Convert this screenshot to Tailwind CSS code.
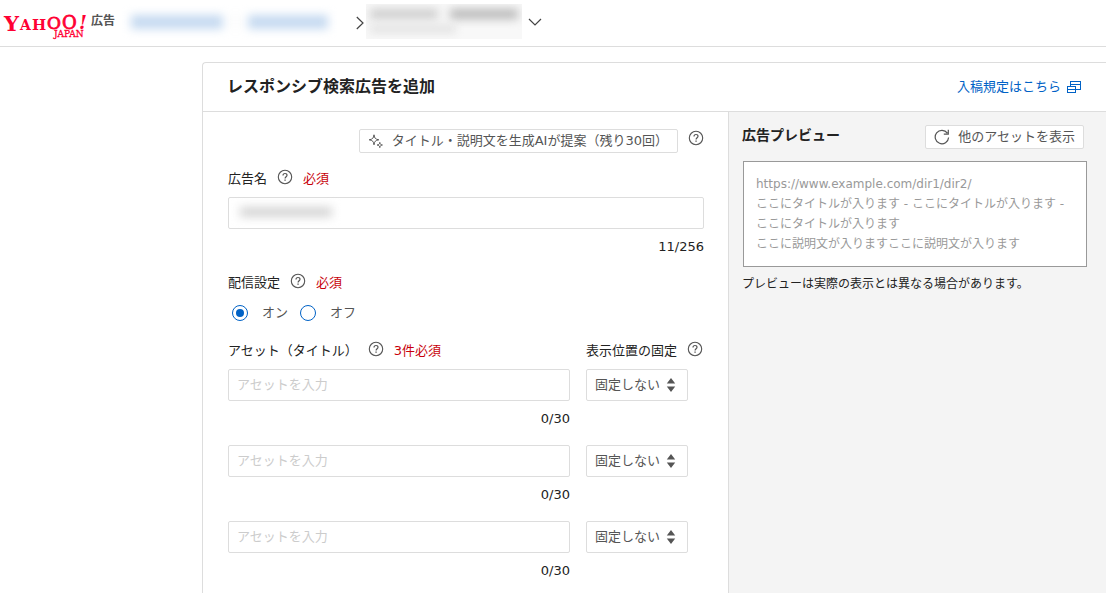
<!DOCTYPE html>
<html lang="ja">
<head>
<meta charset="utf-8">
<meta name="viewport" content="width=device-width, initial-scale=1">
<title>レスポンシブ検索広告を追加</title>
<script src="https://cdn.jsdelivr.net/npm/@tailwindcss/browser@4"></script>
</head>
<body class="flex h-screen flex-col overflow-hidden bg-white font-['DejaVu_Sans','Noto_Sans_CJK_JP',sans-serif] text-[13px] leading-5 text-[#222]">
<svg class="hidden" aria-hidden="true">
  <symbol id="help" viewBox="0 0 16 16">
    <g fill="none" stroke="#555"><circle cx="8" cy="8" r="6.7" stroke-width="1.1"/><path d="M6 6.4C6 5.1 6.9 4.5 8 4.5s2 .7 2 1.8c0 1.4-1.9 1.5-1.9 3.100" stroke-width="1.2"/></g><rect x="7.4" y="10.5" width="1.3" height="1.3" fill="#555"/>
  </symbol>
  <symbol id="updown" viewBox="0 0 10 14"><path d="M5 0l4.2 5.4H.8zM5 14L.8 8.6h8.4z" fill="#555"/></symbol>
</svg>

<header class="flex h-[47px] shrink-0 items-start border-b border-[#ddd]">
  <a href="#" class="flex items-start" aria-label="Yahoo! JAPAN 広告">
    <svg class="h-10 w-[90px] overflow-visible" viewBox="0 0 90 40" fill="#f03" font-family="'DejaVu Serif',serif" font-weight="bold" aria-hidden="true">
      <text x="4" y="31" font-size="21">Y</text>
      <text x="20" y="30" font-size="14">A</text>
      <text x="32" y="30" font-size="15">H</text>
      <g font-weight="normal" stroke="#f03" stroke-width=".8">
        <text x="47" y="29" font-size="17">O</text>
        <text x="62" y="29" font-size="18">O</text>
      </g>
      <text x="79" y="29" font-size="18" font-style="italic">!</text>
      <text x="54" y="37" font-size="9" font-weight="normal" stroke="#f03" stroke-width=".3">JAPAN</text>
    </svg>
    <span class="mt-[13px] ml-px text-xs font-bold text-[#555]">広告</span>
  </a>
  <div class="mt-[15px] ml-4 flex h-[14px] gap-3 blur-[5px]" aria-hidden="true">
    <span class="w-[92px] bg-[#c6daf1]"></span>
    <span class="w-px bg-[#ddd]"></span>
    <span class="w-20 bg-[#c6daf1]"></span>
  </div>
  <svg class="mt-4 ml-7 h-[14px] w-2" viewBox="0 0 8 14" fill="none" stroke="#444" stroke-width="1.2"><path d="M.8 1L7 7 .8 13"/></svg>
  <button type="button" class="mt-1 ml-[2px] flex items-start" aria-label="アカウントを選択">
    <span class="flex h-[35px] w-[156px] flex-col gap-[6px] overflow-hidden bg-[#f8f8f8] px-1 pt-[5px]">
      <span class="flex h-[10px] gap-3 blur-[5px]"><span class="w-[68px] bg-[#cdcdcd]"></span><span class="w-[68px] bg-[#b8b8b8]"></span></span>
      <span class="h-[8px] w-[86px] bg-[#e2e2e2] blur-[4px]"></span>
    </span>
    <svg class="mt-[14px] ml-[6px] h-2 w-[14px]" viewBox="0 0 14 8" fill="none" stroke="#444" stroke-width="1.2"><path d="M1 1l6 6 6-6"/></svg>
  </button>
</header>

<main class="mt-[15px] ml-[202px] flex flex-1 flex-col rounded-tl-sm border-t border-l border-[#ddd]">
  <div class="flex h-[49px] shrink-0 items-center justify-between border-b border-[#ddd] pr-6 pl-6">
    <h1 class="text-base font-bold">レスポンシブ検索広告を追加</h1>
    <a href="#" class="flex items-center gap-[5px] text-[#0062c6]">入稿規定はこちら
      <svg class="h-4 w-4" viewBox="0 0 16 16" fill="none" stroke="#0062c6" stroke-width="1" shape-rendering="crispEdges"><path d="M4.500 7.500v-5h10v8h-5M4.500 5.500h10M1.500 7.500h8v6h-8zM1.500 10.500h8"/></svg>
    </a>
  </div>
  <div class="flex flex-1">
    <form class="flex-1 pt-[17px] pr-6 pl-[25px]">
      <div class="flex items-start justify-end gap-[10px]">
        <button type="button" class="flex h-6 items-center rounded-xs border border-[#ddd] pr-[9px] pl-2 text-[#555]">
          <svg class="mr-2 h-4 w-4" viewBox="0 0 16 16" fill="none" stroke="#555"><path d="M6 1.800C6.500 5.300 7.400 6.200 10.800 6.800 7.400 7.400 6.500 8.300 6 11.800 5.500 8.300 4.600 7.400 1.200 6.800 4.600 6.200 5.500 5.300 6 1.800zM11.800 9.400c.3 1.700.8 2.300 2.600 2.600-1.800.3-2.300.9-2.600 2.600-.3-1.700-.8-2.300-2.600-2.600 1.800-.3 2.300-.9 2.600-2.600z"/></svg>
          タイトル・説明文を生成AIが提案（残り30回）
        </button>
        <svg class="mt-px h-4 w-4" role="img" aria-label="ヘルプ"><use href="#help"/></svg>
      </div>

      <div class="mt-4 flex h-5 items-center">
        <label for="adname">広告名</label>
        <svg class="mr-[10px] mb-1 ml-[10px] h-4 w-4"><use href="#help"/></svg>
        <span class="text-[#c8000a]">必須</span>
      </div>
      <div class="relative mt-2">
        <input id="adname" type="text" class="block h-8 w-full rounded-xs border border-[#ddd] px-2 outline-none">
        <span class="pointer-events-none absolute top-[10px] left-3 h-[10px] w-[92px] bg-[#d5d5d5] blur-[5px]"></span>
      </div>
      <p class="mt-2 text-right">11/256</p>

      <fieldset class="mt-4">
        <legend class="flex h-5 items-center">配信設定
          <svg class="mr-[10px] mb-1 ml-[10px] h-4 w-4"><use href="#help"/></svg>
          <span class="text-[#c8000a]">必須</span>
        </legend>
        <div class="mt-[10px] flex h-5 items-center pl-1 text-[#555]">
          <input id="on" name="delivery" type="radio" checked class="h-4 w-4 appearance-none rounded-full border border-[#0062c6] bg-white bg-clip-content p-[3px] checked:bg-[#0062c6]">
          <label for="on" class="ml-[14px]">オン</label>
          <input id="off" name="delivery" type="radio" class="ml-3 h-4 w-4 appearance-none rounded-full border border-[#0062c6] bg-white bg-clip-content p-[3px] checked:bg-[#0062c6]">
          <label for="off" class="ml-[14px]">オフ</label>
        </div>
      </fieldset>

      <div class="mt-[18px] grid grid-cols-[1fr_118px] gap-x-4">
        <div class="flex h-5 items-center">アセット（タイトル）
          <svg class="mr-[10px] mb-1 ml-[10px] h-4 w-4"><use href="#help"/></svg>
          <span class="text-[#c8000a]">3件必須</span>
        </div>
        <div class="flex h-5 items-center">表示位置の固定
          <svg class="mb-1 ml-[10px] h-4 w-4"><use href="#help"/></svg>
        </div>

        <div class="mt-2">
          <input type="text" aria-label="アセット（タイトル）1" placeholder="アセットを入力" class="block h-8 w-full rounded-xs border border-[#ddd] px-2 pb-[2px] outline-none placeholder:text-[#ccc]">
          <p class="mt-2 text-right">0/30</p>
        </div>
        <div class="mt-2">
          <div class="relative w-[102px]">
            <select aria-label="表示位置の固定 1" class="h-8 w-full appearance-none rounded-xs border border-[#ddd] bg-white pl-2 text-[#555]"><option>固定しない</option></select>
            <svg class="pointer-events-none absolute top-[9px] right-3 h-[14px] w-[10px]"><use href="#updown"/></svg>
          </div>
        </div>

        <div class="mt-4">
          <input type="text" aria-label="アセット（タイトル）2" placeholder="アセットを入力" class="block h-8 w-full rounded-xs border border-[#ddd] px-2 pb-[2px] outline-none placeholder:text-[#ccc]">
          <p class="mt-2 text-right">0/30</p>
        </div>
        <div class="mt-4">
          <div class="relative w-[102px]">
            <select aria-label="表示位置の固定 2" class="h-8 w-full appearance-none rounded-xs border border-[#ddd] bg-white pl-2 text-[#555]"><option>固定しない</option></select>
            <svg class="pointer-events-none absolute top-[9px] right-3 h-[14px] w-[10px]"><use href="#updown"/></svg>
          </div>
        </div>

        <div class="mt-4">
          <input type="text" aria-label="アセット（タイトル）3" placeholder="アセットを入力" class="block h-8 w-full rounded-xs border border-[#ddd] px-2 pb-[2px] outline-none placeholder:text-[#ccc]">
          <p class="mt-2 text-right">0/30</p>
        </div>
        <div class="mt-4">
          <div class="relative w-[102px]">
            <select aria-label="表示位置の固定 3" class="h-8 w-full appearance-none rounded-xs border border-[#ddd] bg-white pl-2 text-[#555]"><option>固定しない</option></select>
            <svg class="pointer-events-none absolute top-[9px] right-3 h-[14px] w-[10px]"><use href="#updown"/></svg>
          </div>
        </div>
      </div>
    </form>

    <aside class="w-[378px] border-l border-[#ddd] bg-[#f4f4f4] pt-[13px] pr-[19px] pl-[13px]">
      <div class="flex items-start justify-between pr-[3px]">
        <h2 class="text-sm font-bold">広告プレビュー</h2>
        <button type="button" class="flex h-6 items-center rounded-xs border border-[#ddd] bg-white pr-2 pl-2 text-[#555]">
          <svg class="mr-2 h-4 w-4" viewBox="0 0 16 16" fill="none" stroke="#555" stroke-width="1.2"><path d="M14.600 8.500A6.700 6.700 0 1 1 13.400 4.200M14.300.8v4.300H9.800"/></svg>
          他のアセットを表示
        </button>
      </div>
      <div class="mt-3 ml-px border border-[#999] bg-white px-3 py-3 text-xs leading-5 text-[#999]">
        <p>https://www.example.com/dir1/dir2/</p>
        <p>ここにタイトルが入ります - ここにタイトルが入ります - ここにタイトルが入ります</p>
        <p>ここに説明文が入りますここに説明文が入ります</p>
      </div>
      <p class="mt-[7px] text-xs leading-5">プレビューは実際の表示とは異なる場合があります。</p>
    </aside>
  </div>
</main>
</body>
</html>
